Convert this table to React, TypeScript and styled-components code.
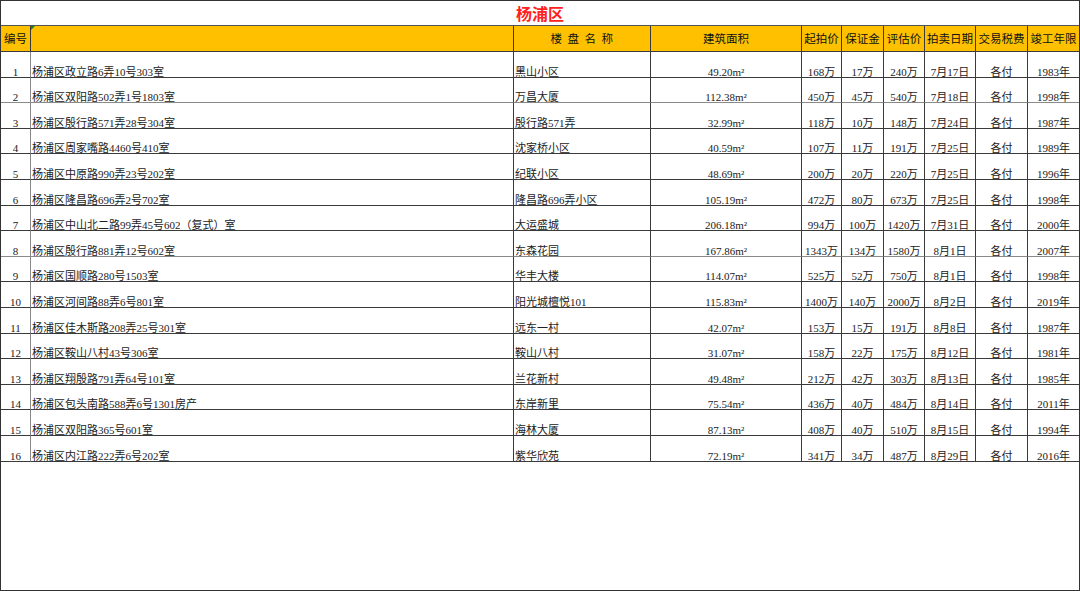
import React from 'react';
import styled, { createGlobalStyle } from 'styled-components';

const GlobalStyle = createGlobalStyle`
  html, body {
    margin: 0;
    padding: 0;
    background: #ffffff;
  }
  body {
    font-family: "Liberation Serif", "Noto Sans CJK SC", serif;
    color: #111;
  }
`;

const Sheet = styled.div`
  box-sizing: border-box;
  width: 1080px;
  height: 591px;
  border: 1px solid #333;
  background: #fff;
  overflow: hidden;
`;

const Grid = styled.div`
  display: grid;
  grid-template-columns: 30px 483px 137px 151px 40px 42px 41px 51px 52px 51px;
  grid-template-rows: 25px 26px repeat(16, 25.6px);
`;

const TitleCell = styled.div`
  grid-column: 1 / -1;
  box-sizing: border-box;
  border-bottom: 1px solid #555;
  display: flex;
  align-items: center;
  justify-content: center;
  font-family: "Noto Sans CJK SC", sans-serif;
  font-weight: 700;
  font-size: 16px;
  color: #ff2020;
  line-height: 1;
`;

const HeadCell = styled.div<{ $last?: boolean; $align?: 'left' | 'center'; $spaced?: boolean }>`
  position: relative;
  box-sizing: border-box;
  background: #ffc000;
  border-bottom: 1px solid #3a3a3a;
  border-right: ${(p) => (p.$last ? 'none' : '1px solid #3a3a3a')};
  display: flex;
  align-items: center;
  justify-content: ${(p) => (p.$align === 'left' ? 'flex-start' : 'center')};
  padding-left: ${(p) => (p.$align === 'left' ? '3px' : p.$spaced ? '5px' : '0')};
  font-family: "Noto Sans CJK SC", sans-serif;
  font-size: 11.5px;
  letter-spacing: ${(p) => (p.$spaced ? '5.5px' : '0')};
  color: #111;
  white-space: nowrap;
  line-height: 1;
`;

const ErrorMark = styled.span`
  position: absolute;
  top: 0;
  left: 0;
  width: 0;
  height: 0;
  border-top: 4px solid #1a7f1a;
  border-right: 4px solid transparent;
`;

const Cell = styled.div<{ $last?: boolean; $align?: 'left' | 'center'; $soft?: boolean }>`
  box-sizing: border-box;
  border-bottom: 1px solid ${(p) => (p.$soft ? '#8a8a8a' : '#3a3a3a')};
  border-right: ${(p) => (p.$last ? 'none' : '1px solid #3a3a3a')};
  display: flex;
  align-items: flex-end;
  justify-content: ${(p) => (p.$align === 'left' ? 'flex-start' : 'center')};
  padding-left: ${(p) => (p.$align === 'left' ? '1px' : '0')};
  font-family: "Liberation Serif", "Noto Sans CJK SC", serif;
  font-size: 11px;
  color: #222;
  white-space: nowrap;
  line-height: 10px;
`;

const IndexCell = styled(Cell)`
  border-right: 1px solid #888;
`;

type Lot = {
  addr: string;
  name: string;
  area: string;
  start: string;
  deposit: string;
  appraisal: string;
  date: string;
  tax: string;
  year: string;
};

const lots: Lot[] = [
  { addr: '杨浦区政立路6弄10号303室', name: '黑山小区', area: '49.20', start: '168万', deposit: '17万', appraisal: '240万', date: '7月17日', tax: '各付', year: '1983年' },
  { addr: '杨浦区双阳路502弄1号1803室', name: '万昌大厦', area: '112.38', start: '450万', deposit: '45万', appraisal: '540万', date: '7月18日', tax: '各付', year: '1998年' },
  { addr: '杨浦区殷行路571弄28号304室', name: '殷行路571弄', area: '32.99', start: '118万', deposit: '10万', appraisal: '148万', date: '7月24日', tax: '各付', year: '1987年' },
  { addr: '杨浦区周家嘴路4460号410室', name: '沈家桥小区', area: '40.59', start: '107万', deposit: '11万', appraisal: '191万', date: '7月25日', tax: '各付', year: '1989年' },
  { addr: '杨浦区中原路990弄23号202室', name: '纪联小区', area: '48.69', start: '200万', deposit: '20万', appraisal: '220万', date: '7月25日', tax: '各付', year: '1996年' },
  { addr: '杨浦区隆昌路696弄2号702室', name: '隆昌路696弄小区', area: '105.19', start: '472万', deposit: '80万', appraisal: '673万', date: '7月25日', tax: '各付', year: '1998年' },
  { addr: '杨浦区中山北二路99弄45号602（复式）室', name: '大运盛城', area: '206.18', start: '994万', deposit: '100万', appraisal: '1420万', date: '7月31日', tax: '各付', year: '2000年' },
  { addr: '杨浦区殷行路881弄12号602室', name: '东森花园', area: '167.86', start: '1343万', deposit: '134万', appraisal: '1580万', date: '8月1日', tax: '各付', year: '2007年' },
  { addr: '杨浦区国顺路280号1503室', name: '华丰大楼', area: '114.07', start: '525万', deposit: '52万', appraisal: '750万', date: '8月1日', tax: '各付', year: '1998年' },
  { addr: '杨浦区河间路88弄6号801室', name: '阳光城檀悦101', area: '115.83', start: '1400万', deposit: '140万', appraisal: '2000万', date: '8月2日', tax: '各付', year: '2019年' },
  { addr: '杨浦区佳木斯路208弄25号301室', name: '远东一村', area: '42.07', start: '153万', deposit: '15万', appraisal: '191万', date: '8月8日', tax: '各付', year: '1987年' },
  { addr: '杨浦区鞍山八村43号306室', name: '鞍山八村', area: '31.07', start: '158万', deposit: '22万', appraisal: '175万', date: '8月12日', tax: '各付', year: '1981年' },
  { addr: '杨浦区翔殷路791弄64号101室', name: '兰花新村', area: '49.48', start: '212万', deposit: '42万', appraisal: '303万', date: '8月13日', tax: '各付', year: '1985年' },
  { addr: '杨浦区包头南路588弄6号1301房产', name: '东岸新里', area: '75.54', start: '436万', deposit: '40万', appraisal: '484万', date: '8月14日', tax: '各付', year: '2011年' },
  { addr: '杨浦区双阳路365号601室', name: '海林大厦', area: '87.13', start: '408万', deposit: '40万', appraisal: '510万', date: '8月15日', tax: '各付', year: '1994年' },
  { addr: '杨浦区内江路222弄6号202室', name: '紫华欣苑', area: '72.19', start: '341万', deposit: '34万', appraisal: '487万', date: '8月29日', tax: '各付', year: '2016年' },
];

const headers = ['起拍价', '保证金', '评估价', '拍卖日期', '交易税费', '竣工年限'];

// rows whose bottom rule renders lighter in the screenshot
const softRows = new Set([1, 7]);

const App: React.FC = () => {
  return (
    <>
      <GlobalStyle />
      <Sheet>
        <Grid>
          <TitleCell>杨浦区</TitleCell>

          <HeadCell $align="left">编号</HeadCell>
          <HeadCell>
            <ErrorMark />
          </HeadCell>
          <HeadCell $spaced>楼盘名称</HeadCell>
          <HeadCell>建筑面积</HeadCell>
          {headers.map((h, i) => (
            <HeadCell key={h} $last={i === headers.length - 1}>
              {h}
            </HeadCell>
          ))}

          {lots.map((lot, i) => {
            const soft = softRows.has(i);
            return (
              <React.Fragment key={lot.addr}>
                <IndexCell $soft={soft}>{i + 1}</IndexCell>
                <Cell $align="left" $soft={soft}>{lot.addr}</Cell>
                <Cell $align="left" $soft={soft}>{lot.name}</Cell>
                <Cell $soft={soft}>{lot.area}m²</Cell>
                <Cell $soft={soft}>{lot.start}</Cell>
                <Cell $soft={soft}>{lot.deposit}</Cell>
                <Cell $soft={soft}>{lot.appraisal}</Cell>
                <Cell $soft={soft}>{lot.date}</Cell>
                <Cell $soft={soft}>{lot.tax}</Cell>
                <Cell $soft={soft} $last>{lot.year}</Cell>
              </React.Fragment>
            );
          })}
        </Grid>
      </Sheet>
    </>
  );
};

export default App;
